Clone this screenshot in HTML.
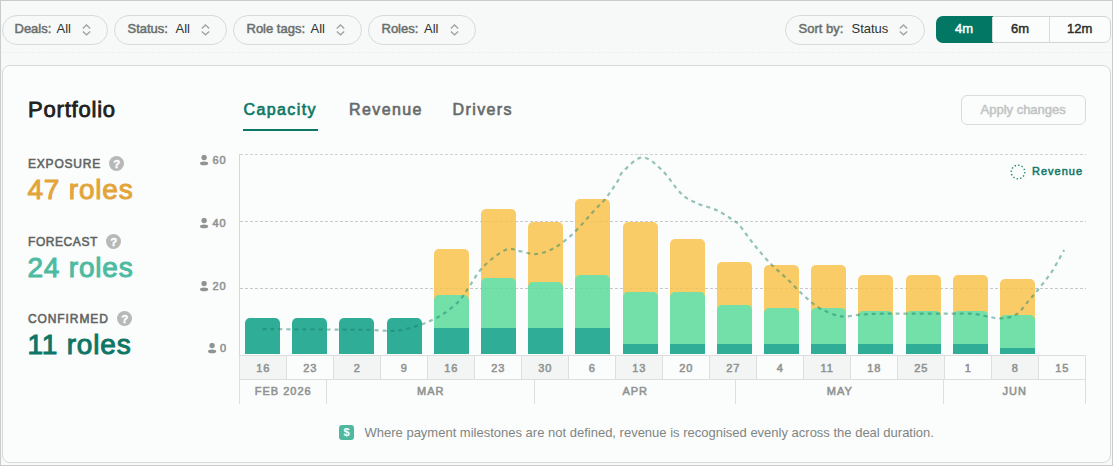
<!DOCTYPE html>
<html><head><meta charset="utf-8">
<style>
*{margin:0;padding:0;box-sizing:border-box}
html,body{width:1113px;height:466px;overflow:hidden}
body{position:relative;background:#f6f9f8;font-family:"Liberation Sans",sans-serif;}
.frame{position:absolute;left:0;top:0;width:1113px;height:466px;border:1px solid #c9cccb;}
.t{position:absolute;line-height:1;white-space:nowrap}
.pill{position:absolute;top:15px;height:30px;border:1px solid #d7dad9;border-radius:15px;background:transparent}
.lab{font-size:13px;-webkit-text-stroke:0.5px currentColor;color:#6a6f6d;top:22.4px}
.val{font-size:13px;color:#2d3230;top:22px}
.chev{position:absolute;top:24px}
.chev svg{display:block}
.seg{position:absolute;left:936px;top:16px;width:175px;height:27px;border:1px solid #d2d5d4;border-radius:7px;background:#fbfcfc}
.seg .on{position:absolute;left:-1px;top:-1px;width:57px;height:27px;background:#027763;border-radius:7px 0 0 7px}
.seg .dv{position:absolute;top:0;width:1px;height:25px;background:#d9dcdb}
.segt{font-size:13px;-webkit-text-stroke:0.45px currentColor;top:22px;color:#2a2e2c}
.card{position:absolute;left:2px;top:65px;width:1109px;height:398px;border:1px solid #d6d9d8;border-radius:8px;background:#fbfcfc}
.dotline{position:absolute;left:2px;top:52px;width:1108px;height:1px;background-image:linear-gradient(to right,#eef1f0 60%,transparent 60%);background-size:5px 1px}
.title{font-size:22px;letter-spacing:0.8px;-webkit-text-stroke:0.8px #1d2120;color:#1d2120;left:28px;top:98.9px}
.tab{font-size:16px;letter-spacing:1.4px;-webkit-text-stroke:0.65px currentColor;top:101.7px;color:#666b69}
.tab.on{color:#0d7865}
.uline{position:absolute;left:243px;top:129px;width:75px;height:2px;background:#0d7865}
.apply{position:absolute;left:961px;top:95px;width:125px;height:30px;border:1px solid #d9dcdb;border-radius:6px}
.applyt{font-size:13px;-webkit-text-stroke:0.5px currentColor;color:#c1c4c3;left:980.5px;top:102.8px}
.mlab{font-size:12px;-webkit-text-stroke:0.55px currentColor;letter-spacing:1px;color:#5f6462;left:28px}
.q{position:absolute;width:15px;height:15px;border-radius:50%;background:#b6b9b8;color:#fff;font-size:11.5px;font-weight:bold;-webkit-text-stroke:0.4px #fff;text-align:center;line-height:17px}
.num{font-size:28px;letter-spacing:0.8px;-webkit-text-stroke:1px currentColor;left:27.5px}
.grid{position:absolute;left:240px;width:846px;height:1px;background-image:linear-gradient(to right,#cfd2d1 60%,transparent 60%);background-size:5px 1px}
.grid2{position:absolute;left:240px;width:846px;height:1px;background-image:linear-gradient(to right,rgba(0,0,0,0.045) 60%,transparent 60%);background-size:5px 1px}
.axis{position:absolute;left:239px;top:154px;width:1px;height:250px;background:#d5d8d7}
.ylab{font-size:11px;-webkit-text-stroke:0.55px currentColor;color:#8f9492;letter-spacing:1px}
.pi{position:absolute}
.bar{position:absolute;width:35px;border-radius:5px 5px 0 0}
.bar.y{background:#f9cc68}
.bar.g{background:#72e0a8}
.bar.t{background:#30ad97}
.bar.flat{border-radius:0}
.wrow{position:absolute;left:239px;top:355px;width:847px;height:1px;background:#dcdfde}
.wrow2{position:absolute;left:239px;top:379px;width:847px;height:1px;background:#dcdfde}
.wk{position:absolute;top:356px;width:47px;height:23px;border-right:1px solid #dcdfde}
.wk.alt{background:#f2f5f4}
.wk span,.mo span{position:absolute;left:0;right:0;text-align:center;font-size:11px;-webkit-text-stroke:0.55px currentColor;color:#8f9492;letter-spacing:1px;line-height:1;text-indent:0.5px}
.wk span{top:6.5px}
.mo{position:absolute;top:380px;height:24px;border-right:1px solid #dcdfde}
.mo span{top:6.3px}
.legend{font-size:11px;-webkit-text-stroke:0.5px currentColor;color:#0f7866;letter-spacing:1px;left:1032px;top:165.5px}
.foot{font-size:13px;color:#808583;left:364.5px;top:426px}
.dollar{position:absolute;left:339px;top:425px;width:15px;height:15px;border-radius:3px;background:#4fb9a0;color:#fff;font-size:11px;font-weight:bold;text-align:center;line-height:15px}
</style></head><body>
<div class="frame"></div>

<div class="pill" style="left:2px;width:106px"></div>
<span class="t lab" style="left:14.5px">Deals:</span><span class="t val" style="left:56.5px">All</span><span class="chev" style="left:82px"><svg width="10" height="12" viewBox="0 0 10 12"><path d="M0.8 4.4 L4.5 1 L8.2 4.4 M0.8 7.4 L4.5 10.8 L8.2 7.4" fill="none" stroke="#9ea2a0" stroke-width="1.3"/></svg></span>
<div class="pill" style="left:114px;width:113px"></div>
<span class="t lab" style="left:127.5px">Status:</span><span class="t val" style="left:175.5px">All</span><span class="chev" style="left:200.5px"><svg width="10" height="12" viewBox="0 0 10 12"><path d="M0.8 4.4 L4.5 1 L8.2 4.4 M0.8 7.4 L4.5 10.8 L8.2 7.4" fill="none" stroke="#9ea2a0" stroke-width="1.3"/></svg></span>
<div class="pill" style="left:233px;width:129px"></div>
<span class="t lab" style="left:246.5px">Role tags:</span><span class="t val" style="left:310.5px">All</span><span class="chev" style="left:336px"><svg width="10" height="12" viewBox="0 0 10 12"><path d="M0.8 4.4 L4.5 1 L8.2 4.4 M0.8 7.4 L4.5 10.8 L8.2 7.4" fill="none" stroke="#9ea2a0" stroke-width="1.3"/></svg></span>
<div class="pill" style="left:368px;width:108px"></div>
<span class="t lab" style="left:381.5px">Roles:</span><span class="t val" style="left:424px">All</span><span class="chev" style="left:450px"><svg width="10" height="12" viewBox="0 0 10 12"><path d="M0.8 4.4 L4.5 1 L8.2 4.4 M0.8 7.4 L4.5 10.8 L8.2 7.4" fill="none" stroke="#9ea2a0" stroke-width="1.3"/></svg></span>

<div class="pill" style="left:785px;width:140px"></div>
<span class="t lab" style="left:798.5px">Sort by:</span><span class="t val" style="left:851.5px">Status</span><span class="chev" style="left:898.5px"><svg width="10" height="12" viewBox="0 0 10 12"><path d="M0.8 4.4 L4.5 1 L8.2 4.4 M0.8 7.4 L4.5 10.8 L8.2 7.4" fill="none" stroke="#9ea2a0" stroke-width="1.3"/></svg></span>

<div class="seg"><div class="on"></div><div class="dv" style="left:55px"></div><div class="dv" style="left:112px"></div></div>
<span class="t segt" style="left:955px;color:#fff">4m</span>
<span class="t segt" style="left:1011px">6m</span>
<span class="t segt" style="left:1067px">12m</span>

<div class="dotline"></div>
<div class="card"></div>

<span class="t title">Portfolio</span>
<span class="t tab on" style="left:243.5px">Capacity</span>
<span class="t tab" style="left:349px">Revenue</span>
<span class="t tab" style="left:452.5px">Drivers</span>
<div class="uline"></div>
<div class="apply"></div>
<span class="t applyt">Apply changes</span>

<span class="t mlab" style="top:157.5px;letter-spacing:0.8px">EXPOSURE</span><div class="q" style="left:109.2px;top:156.2px">?</div>
<span class="t num" style="top:176px;color:#e3a53b">47 roles</span>
<span class="t mlab" style="top:235.5px;letter-spacing:0.57px">FORECAST</span><div class="q" style="left:106.2px;top:234.2px">?</div>
<span class="t num" style="top:254px;color:#4dbba1">24 roles</span>
<span class="t mlab" style="top:312.5px;letter-spacing:0.9px">CONFIRMED</span><div class="q" style="left:117.2px;top:311.2px">?</div>
<span class="t num" style="top:331px;color:#0e7664">11 roles</span>

<div class="grid" style="top:154px"></div>
<div class="grid" style="top:221px"></div>
<div class="grid" style="top:288px"></div>
<div class="axis"></div>
<svg class="pi" style="left:200px;top:155px" width="9" height="11" viewBox="0 0 9 11"><circle cx="4.1" cy="2.6" r="2.7" fill="#8f9492"/><ellipse cx="4.1" cy="8.4" rx="4.1" ry="1.8" fill="#8f9492"/></svg><span class="t ylab" style="left:212.5px;top:155px">60</span>
<svg class="pi" style="left:200px;top:218px" width="9" height="11" viewBox="0 0 9 11"><circle cx="4.1" cy="2.6" r="2.7" fill="#8f9492"/><ellipse cx="4.1" cy="8.4" rx="4.1" ry="1.8" fill="#8f9492"/></svg><span class="t ylab" style="left:212.5px;top:218px">40</span>
<svg class="pi" style="left:200px;top:281px" width="9" height="11" viewBox="0 0 9 11"><circle cx="4.1" cy="2.6" r="2.7" fill="#8f9492"/><ellipse cx="4.1" cy="8.4" rx="4.1" ry="1.8" fill="#8f9492"/></svg><span class="t ylab" style="left:212.5px;top:281px">20</span>
<svg class="pi" style="left:208px;top:343px" width="9" height="11" viewBox="0 0 9 11"><circle cx="4.1" cy="2.6" r="2.7" fill="#8f9492"/><ellipse cx="4.1" cy="8.4" rx="4.1" ry="1.8" fill="#8f9492"/></svg><span class="t ylab" style="left:220px;top:342.8px">0</span>

<div class="bar t" style="left:245px;top:318px;height:36px"></div>
<div class="bar t" style="left:292px;top:318px;height:36px"></div>
<div class="bar t" style="left:339px;top:318px;height:36px"></div>
<div class="bar t" style="left:387px;top:318px;height:36px"></div>
<div class="bar y" style="left:434px;top:249px;height:105px"></div>
<div class="bar g" style="left:434px;top:295px;height:59px"></div>
<div class="bar t flat" style="left:434px;top:328px;height:26px"></div>
<div class="bar y" style="left:481px;top:209px;height:145px"></div>
<div class="bar g" style="left:481px;top:278px;height:76px"></div>
<div class="bar t flat" style="left:481px;top:328px;height:26px"></div>
<div class="bar y" style="left:528px;top:222px;height:132px"></div>
<div class="bar g" style="left:528px;top:282px;height:72px"></div>
<div class="bar t flat" style="left:528px;top:328px;height:26px"></div>
<div class="bar y" style="left:575px;top:199px;height:155px"></div>
<div class="bar g" style="left:575px;top:275px;height:79px"></div>
<div class="bar t flat" style="left:575px;top:328px;height:26px"></div>
<div class="bar y" style="left:623px;top:222px;height:132px"></div>
<div class="bar g" style="left:623px;top:292px;height:62px"></div>
<div class="bar t flat" style="left:623px;top:344px;height:10px"></div>
<div class="bar y" style="left:670px;top:239px;height:115px"></div>
<div class="bar g" style="left:670px;top:292px;height:62px"></div>
<div class="bar t flat" style="left:670px;top:344px;height:10px"></div>
<div class="bar y" style="left:717px;top:262px;height:92px"></div>
<div class="bar g" style="left:717px;top:305px;height:49px"></div>
<div class="bar t flat" style="left:717px;top:344px;height:10px"></div>
<div class="bar y" style="left:764px;top:265px;height:89px"></div>
<div class="bar g" style="left:764px;top:308px;height:46px"></div>
<div class="bar t flat" style="left:764px;top:344px;height:10px"></div>
<div class="bar y" style="left:811px;top:265px;height:89px"></div>
<div class="bar g" style="left:811px;top:308px;height:46px"></div>
<div class="bar t flat" style="left:811px;top:344px;height:10px"></div>
<div class="bar y" style="left:858px;top:275px;height:79px"></div>
<div class="bar g" style="left:858px;top:311px;height:43px"></div>
<div class="bar t flat" style="left:858px;top:344px;height:10px"></div>
<div class="bar y" style="left:906px;top:275px;height:79px"></div>
<div class="bar g" style="left:906px;top:311px;height:43px"></div>
<div class="bar t flat" style="left:906px;top:344px;height:10px"></div>
<div class="bar y" style="left:953px;top:275px;height:79px"></div>
<div class="bar g" style="left:953px;top:311px;height:43px"></div>
<div class="bar t flat" style="left:953px;top:344px;height:10px"></div>
<div class="bar y" style="left:1000px;top:279px;height:75px"></div>
<div class="bar g" style="left:1000px;top:315px;height:39px"></div>
<div class="bar t flat" style="left:1000px;top:348px;height:6px"></div>
<div class="grid2" style="top:221px"></div>
<div class="grid2" style="top:288px"></div>
<svg style="position:absolute;left:0;top:0" width="1113" height="466"><path d="M262.5,329.0 C267.1,329.1 276.4,329.2 290.0,329.3 C303.6,329.4 330.7,329.5 343.8,329.6 C356.9,329.7 361.4,329.7 368.9,329.9 C376.4,330.1 383.8,330.8 389.0,330.8 C394.2,330.9 396.0,330.9 400.4,330.2 C404.8,329.5 410.5,328.0 415.5,326.4 C420.5,324.8 425.8,323.0 430.6,320.8 C435.4,318.6 439.8,316.4 444.4,313.2 C449.0,310.0 454.5,305.7 458.2,301.9 C461.9,298.1 462.6,296.2 466.8,290.3 C471.0,284.4 477.0,273.2 483.5,266.5 C490.0,259.8 499.8,252.4 505.8,249.8 C511.9,247.2 514.7,250.5 519.8,251.2 C524.9,251.9 530.5,254.7 536.5,254.0 C542.5,253.3 549.5,250.8 556.0,247.0 C562.5,243.2 569.1,237.4 575.6,231.1 C582.1,224.8 590.4,214.5 595.2,209.3 C600.1,204.1 601.0,204.3 604.7,199.7 C608.4,195.0 614.5,186.1 617.5,181.4 C620.5,176.8 618.8,175.8 622.9,171.8 C627.0,167.8 635.8,157.8 642.2,157.4 C648.6,157.1 655.0,163.7 661.5,169.7 C668.0,175.7 675.2,187.8 680.9,193.3 C686.6,198.8 689.8,200.0 695.9,202.9 C702.0,205.8 710.9,207.4 717.3,210.5 C723.7,213.6 730.7,218.6 734.5,221.2 C738.3,223.8 736.7,222.0 740.0,225.9 C743.3,229.8 749.1,238.5 754.2,244.8 C759.3,251.1 765.2,258.0 770.7,263.7 C776.2,269.4 781.7,273.7 787.2,279.0 C792.7,284.3 798.2,290.6 803.7,295.5 C809.2,300.4 813.9,305.0 820.2,308.5 C826.5,312.0 834.4,315.3 841.5,316.3 C848.6,317.3 856.0,314.8 862.7,314.4 C869.4,314.0 875.0,313.8 881.6,313.7 C888.2,313.6 891.9,313.7 902.1,313.7 C912.3,313.7 931.5,313.7 942.9,313.7 C954.3,313.7 963.6,313.3 970.8,313.7 C977.9,314.1 980.8,315.4 985.8,316.2 C990.8,317.0 995.8,318.6 1000.8,318.4 C1005.8,318.1 1011.2,317.6 1015.9,314.7 C1020.5,311.8 1024.8,305.3 1028.7,300.8 C1032.6,296.3 1035.6,292.9 1039.5,287.9 C1043.4,282.9 1048.2,277.1 1052.3,270.8 C1056.4,264.5 1062.1,253.5 1064.1,250.0" fill="none" stroke="rgba(20,125,105,0.45)" stroke-width="2.2" stroke-dasharray="4 4"/></svg>

<svg style="position:absolute;left:1009px;top:163px" width="18" height="18"><circle cx="9" cy="9" r="6.8" fill="none" stroke="#2a8a78" stroke-width="1.4" stroke-dasharray="1.4 2.15"/></svg>
<span class="t legend">Revenue</span>

<div class="wrow"></div>
<div class="wk alt" style="left:240px"><span>16</span></div>
<div class="wk" style="left:287px"><span>23</span></div>
<div class="wk alt" style="left:334px"><span>2</span></div>
<div class="wk" style="left:381px"><span>9</span></div>
<div class="wk alt" style="left:428px"><span>16</span></div>
<div class="wk" style="left:475px"><span>23</span></div>
<div class="wk alt" style="left:522px"><span>30</span></div>
<div class="wk" style="left:569px"><span>6</span></div>
<div class="wk alt" style="left:616px"><span>13</span></div>
<div class="wk" style="left:663px"><span>20</span></div>
<div class="wk alt" style="left:710px"><span>27</span></div>
<div class="wk" style="left:757px"><span>4</span></div>
<div class="wk alt" style="left:804px"><span>11</span></div>
<div class="wk" style="left:851px"><span>18</span></div>
<div class="wk alt" style="left:898px"><span>25</span></div>
<div class="wk" style="left:945px"><span>1</span></div>
<div class="wk alt" style="left:992px"><span>8</span></div>
<div class="wk" style="left:1039px"><span>15</span></div>
<div class="wrow2"></div>
<div class="mo" style="left:240px;width:87px"><span>FEB 2026</span></div>
<div class="mo" style="left:327px;width:208px"><span>MAR</span></div>
<div class="mo" style="left:535px;width:201px"><span>APR</span></div>
<div class="mo" style="left:736px;width:208px"><span>MAY</span></div>
<div class="mo" style="left:944px;width:142px"><span>JUN</span></div>
<div style="position:absolute;left:239px;top:356px;width:1px;height:48px;background:#dcdfde"></div>

<div class="dollar">$</div>
<span class="t foot">Where payment milestones are not defined, revenue is recognised evenly across the deal duration.</span>
</body></html>
